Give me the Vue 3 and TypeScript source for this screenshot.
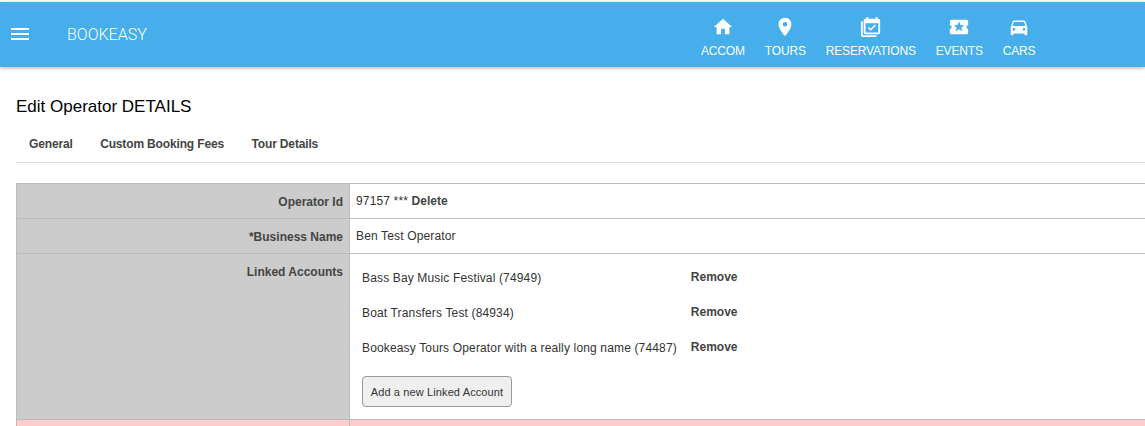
<script setup lang="ts">
const navItems: { label: string; icon: string }[] = [
  { label: 'ACCOM', icon: 'M10 20v-6h4v6h5v-8h3L12 3 2 12h3v8z' },
  { label: 'TOURS', icon: 'M12 2C8.13 2 5 5.13 5 9c0 5.25 7 13 7 13s7-7.75 7-13c0-3.87-3.13-7-7-7zm0 9.5a2.5 2.5 0 0 1 0-5 2.5 2.5 0 0 1 0 5z' },
  { label: 'RESERVATIONS', icon: 'M3 6H1v15a2 2 0 0 0 2 2h15v-2H3zM20 3h-1V1h-2v2H9V1H7v2H6a2 2 0 0 0-2 2v13a2 2 0 0 0 2 2h14a2 2 0 0 0 2-2V5a2 2 0 0 0-2-2zm0 15H6V8h14zM11.6 16.2l-3-3 1.2-1.2 1.8 1.8 4.6-4.6 1.2 1.2z' },
  { label: 'EVENTS', icon: 'M20 12c0-1.1.9-2 2-2V6c0-1.1-.9-2-2-2H4c-1.1 0-1.99.9-1.99 2v4c1.1 0 1.99.9 1.99 2s-.89 2-2 2v4c0 1.1.9 2 2 2h16c1.1 0 2-.9 2-2v-4c-1.1 0-2-.9-2-2zm-4.42 4.8L12 14.5l-3.58 2.3 1.08-4.12-3.29-2.69 4.24-.25L12 5.8l1.54 3.95 4.24.25-3.29 2.69 1.09 4.11z' },
  { label: 'CARS', icon: 'M18.92 6.01C18.72 5.42 18.16 5 17.5 5h-11c-.66 0-1.21.42-1.42 1.01L3 12v8c0 .55.45 1 1 1h1c.55 0 1-.45 1-1v-1h12v1c0 .55.45 1 1 1h1c.55 0 1-.45 1-1v-8l-2.08-5.99zM6.5 16c-.83 0-1.5-.67-1.5-1.5S5.67 13 6.5 13s1.5.67 1.5 1.5S7.33 16 6.5 16zm11 0c-.83 0-1.5-.67-1.5-1.5s.67-1.5 1.5-1.5 1.5.67 1.5 1.5-.67 1.5-1.5 1.5zM5 11l1.5-4.5h11L19 11H5z' }
]
const tabs: string[] = ['General', 'Custom Booking Fees', 'Tour Details']
const linked: string[] = [
  'Bass Bay Music Festival (74949)',
  'Boat Transfers Test (84934)',
  'Bookeasy Tours Operator with a really long name (74487)'
]
</script>

<template>
  <div class="page">
    <header class="bar">
      <div class="burger"><span></span><span></span><span></span></div>
      <div class="brand">BOOKEASY</div>
      <nav class="nav">
        <a v-for="n in navItems" :key="n.label" class="nav-item">
          <svg viewBox="0 0 24 24" width="22" height="22"><path :d="n.icon" fill="#fff" /></svg>
          <span>{{ n.label }}</span>
        </a>
      </nav>
    </header>

    <main class="content">
      <h1 class="title">Edit Operator DETAILS</h1>
      <div class="tabs">
        <a v-for="t in tabs" :key="t" class="tab">{{ t }}</a>
      </div>
      <div class="form">
        <div class="row r35">
          <div class="label">Operator Id</div>
          <div class="value">97157 *** <b>Delete</b></div>
        </div>
        <div class="row r35">
          <div class="label">*Business Name</div>
          <div class="value">Ben Test Operator</div>
        </div>
        <div class="row">
          <div class="label">Linked Accounts</div>
          <div class="value linked">
            <div class="links">
              <template v-for="l in linked" :key="l">
                <span class="lname">{{ l }}</span>
                <b class="remove">Remove</b>
              </template>
            </div>
            <button class="add" type="button">Add a new Linked Account</button>
          </div>
        </div>
        <div class="row alert">
          <div class="label"></div>
          <div class="value"></div>
        </div>
      </div>
    </main>
  </div>
</template>

<style>
html, body { margin: 0; overflow: hidden; background: #fff; }
</style>

<style scoped>
.page {
  width: 1145px;
  height: 426px;
  overflow: hidden;
  padding-top: 2px;
  box-sizing: border-box;
  font-family: "Liberation Sans", Arial, sans-serif;
  color: #444;
  font-size: 12px;
}
.bar {
  height: 65px;
  background: #45aeeb;
  display: flex;
  align-items: center;
  color: #fff;
  box-shadow: 0 1px 4px rgba(0, 0, 0, 0.3);
}
.burger {
  width: 18px;
  margin-left: 11px;
  display: flex;
  flex-direction: column;
  gap: 3px;
  margin-top: -2px;
}
.burger span { height: 2px; background: #fff; display: block; }
.brand {
  margin-left: 38px;
  font-family: Roboto, sans-serif;
  font-weight: 300;
  font-size: 16px;
  margin-top: -1px;
  width: 631px;
}
.nav { display: flex; gap: 20px; margin-left: 3px; }
.nav-item {
  display: flex;
  flex-direction: column;
  align-items: center;
  font-size: 12px;
  line-height: 14px;
  letter-spacing: -0.17px;
  gap: 6px;
  margin-top: 5px;
}
.content { padding: 0 0 0 16px; }
.title {
  margin: 30px 0 0;
  font-size: 17px;
  font-weight: 400;
  line-height: 20px;
  color: #000;
}
.tabs {
  display: flex;
  margin-top: 12px;
  height: 33px;
  border-bottom: 1px solid #ddd;
}
.tab {
  font-weight: 700;
  letter-spacing: -0.15px;
  padding: 8px 14.5px 0 13px;
  line-height: 14px;
}
.form {
  margin-top: 20px;
  width: 1200px;
  border-top: 1px solid #bbb;
  border-left: 1px solid #bbb;
}
.row {
  display: grid;
  grid-template-columns: 333px 1fr;
  border-bottom: 1px solid #bbb;
}
.r35 { height: 34px; }
.label {
  background: #ccc;
  border-right: 1px solid #bbb;
  text-align: right;
  font-weight: 700;
  padding: 11px 6px 0 0;
  line-height: 14px;
}
.value {
  padding: 10px 6px 0;
  line-height: 14px;
  letter-spacing: 0.15px;
  color: #333;
}
.value b { letter-spacing: 0; color: #444; }
.linked { padding: 0 12px 12px; }
.links {
  display: grid;
  grid-template-columns: max-content 1fr;
  column-gap: 14px;
  row-gap: 21px;
  padding-top: 17px;
}
.remove { position: relative; top: -1px; }
.add {
  display: block;
  margin-top: 21px;
  width: 150px;
  height: 31px;
  padding: 0;
  font: 11px "Liberation Sans", Arial, sans-serif;
  letter-spacing: 0.12px;
  color: #333;
  background: #efefef;
  border: 1px solid #999;
  border-radius: 4px;
}
.alert { height: 40px; }
.alert .label, .alert .value { background: #fcc; }
</style>
